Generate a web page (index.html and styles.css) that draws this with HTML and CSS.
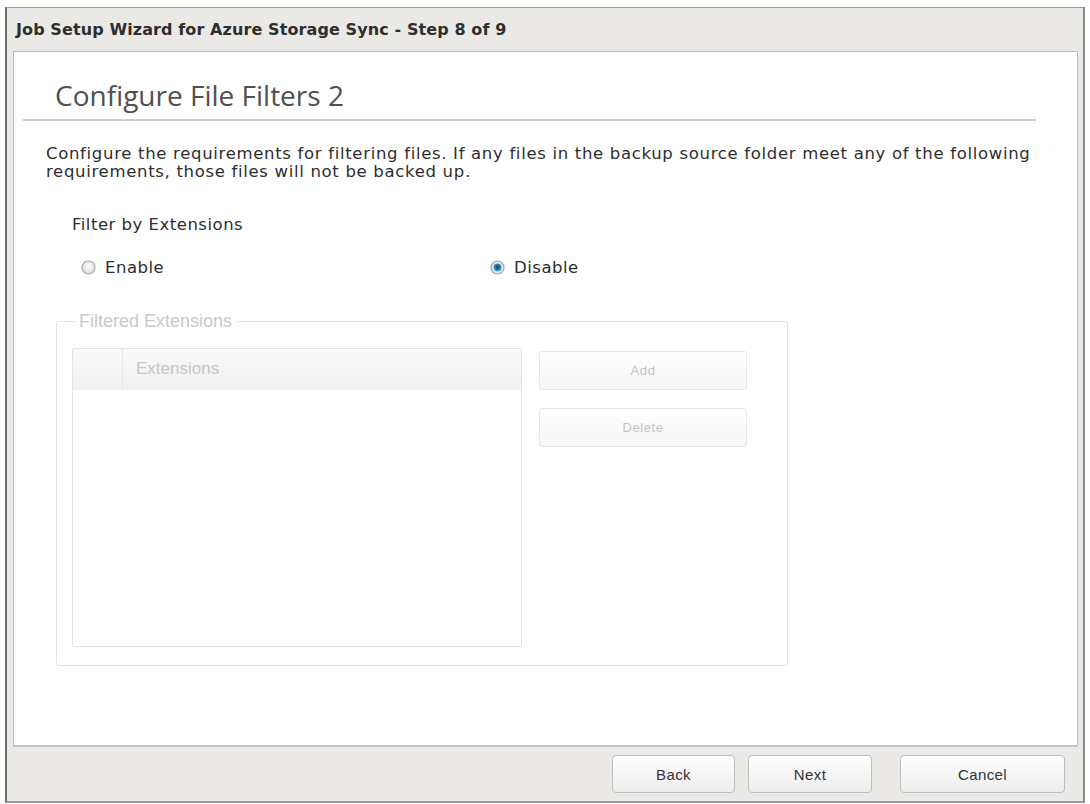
FILE: index.html
```html
<!DOCTYPE html>
<html>
<head>
<meta charset="utf-8">
<link rel="stylesheet" href="styles.css">
</head>
<body>
<div class="window">
  <div class="titlebar">Job Setup Wizard for Azure Storage Sync - Step 8 of 9</div>
  <div class="panel">
    <h1 class="heading">Configure File Filters 2</h1>
    <div class="rule"></div>
    <p class="desc">Configure the requirements for filtering files. If any files in the backup source folder meet any of the following requirements, those files will not be backed up.</p>
    <div class="label">Filter by Extensions</div>
    <div class="radios">
      <label class="radio radio-enable">
        <svg class="radio-icon" width="15" height="15" viewBox="0 0 15 15">
          <defs>
            <radialGradient id="ug" cx="50%" cy="40%" r="60%">
              <stop offset="0" stop-color="#ffffff"/>
              <stop offset="1" stop-color="#d8d8d8"/>
            </radialGradient>
          </defs>
          <circle cx="7.5" cy="7.5" r="6.5" fill="url(#ug)" stroke="#a8a8a8" stroke-width="1.2"/>
        </svg>
        <span>Enable</span>
      </label>
      <label class="radio">
        <svg class="radio-icon" width="15" height="15" viewBox="0 0 15 15">
          <defs>
            <radialGradient id="cg" cx="50%" cy="45%" r="55%">
              <stop offset="0" stop-color="#0d3f5e"/>
              <stop offset="0.6" stop-color="#2a7fae"/>
              <stop offset="1" stop-color="#6fb3d6"/>
            </radialGradient>
          </defs>
          <circle cx="7.5" cy="7.5" r="6.5" fill="#dfe6ea" stroke="#9aa6ad" stroke-width="1.2"/>
          <circle cx="7.5" cy="7.5" r="4" fill="url(#cg)"/>
        </svg>
        <span>Disable</span>
      </label>
    </div>
    <fieldset class="filtered">
      <legend class="legend">Filtered Extensions</legend>
      <div class="filtered-body">
        <div class="table">
          <div class="table-head">
            <div class="col-check"></div>
            <div class="col-ext">Extensions</div>
          </div>
          <div class="table-rows"></div>
        </div>
        <div class="side-buttons">
          <button class="btn-disabled">Add</button>
          <button class="btn-disabled">Delete</button>
        </div>
      </div>
    </fieldset>
  </div>
  <div class="footer">
    <button class="btn btn-back">Back</button>
    <button class="btn btn-next">Next</button>
    <button class="btn btn-cancel">Cancel</button>
  </div>
</div>
</body>
</html>
```
FILE: styles.css
```css
html, body {
  margin: 0;
  padding: 0;
  background: #ffffff;
}

body {
  font-family: "DejaVu Sans", sans-serif;
  color: #333333;
}

.window {
  margin: 7px 0 0 5px;
  width: 1076px;
  height: 793px;
  border: 1px solid #9a9a9a;
  border-left: 2px solid #6e6e6e;
  border-right: 2px solid #8a8a8a;
  border-bottom: 2px solid #9a9a9a;
  background: #ebe9e6;
  display: flex;
  flex-direction: column;
}

.titlebar {
  height: 43px;
  flex: none;
  display: flex;
  align-items: center;
  padding-left: 9px;
  font-family: "DejaVu Sans", sans-serif;
  font-weight: bold;
  font-size: 16px;
  letter-spacing: 0.1px;
  color: #2e2e2e;
}

.panel {
  flex: 1;
  margin: 0 5px 0 6px;
  background: #ffffff;
  border: 1px solid #bdbdbd;
  border-bottom: 2px solid #c4c4c4;
  display: flex;
  flex-direction: column;
}

.heading {
  margin: 27px 0 0 41px;
  font-family: "Open Sans", "Noto Sans", sans-serif;
  font-size: 28px;
  line-height: 32px;
  font-weight: normal;
  color: #505050;
}

.rule {
  margin: 8px 41px 0 9px;
  height: 2px;
  background: #cfcfcf;
}

.desc {
  margin: 24px 20px 0 32px;
  font-size: 16.5px;
  line-height: 18px;
  letter-spacing: 0.68px;
  color: #2e2e2e;
}

.label {
  margin: 34px 0 0 58px;
  font-size: 16.5px;
  line-height: 20px;
  letter-spacing: 0.5px;
  color: #2e2e2e;
}

.radios {
  margin: 22px 0 0 67px;
  display: flex;
  height: 20px;
  align-items: center;
}

.radio {
  display: flex;
  align-items: center;
  gap: 9px;
  font-size: 16.5px;
  letter-spacing: 0.5px;
  color: #2e2e2e;
}

.radio-enable {
  width: 409px;
}

.radio-icon {
  display: block;
}

.filtered {
  margin: 34px 0 0 42px;
  width: 732px;
  height: 355px;
  box-sizing: border-box;
  border: 1px solid #e4e4e4;
  border-radius: 3px;
  padding: 0 0 0 15px;
}

.legend {
  font-family: "Liberation Sans", Arial, sans-serif;
  font-size: 18px;
  color: #c9c9c9;
  padding: 0 4px;
  margin-left: 3px;
}

.filtered-body {
  display: flex;
  gap: 17px;
  margin-top: 16px;
}

.table {
  width: 450px;
  height: 299px;
  box-sizing: border-box;
  border: 1px solid #e3e3e3;
  border-radius: 2px;
  display: flex;
  flex-direction: column;
}

.table-head {
  height: 40px;
  display: flex;
  background: linear-gradient(#f9f9f9, #f0f0f0);
  border-bottom: 1px solid #ececec;
}

.col-check {
  width: 49px;
  border-right: 1px solid #e6e6e6;
}

.col-ext {
  flex: 1;
  display: flex;
  align-items: center;
  padding-left: 13px;
  font-family: "Liberation Sans", Arial, sans-serif;
  font-size: 17px;
  color: #c6c6c6;
}

.table-rows {
  flex: 1;
}

.side-buttons {
  display: flex;
  flex-direction: column;
  gap: 18px;
  padding-top: 3px;
}

.btn-disabled {
  width: 208px;
  height: 39px;
  border: 1px solid #e6e6e6;
  border-radius: 3px;
  background: linear-gradient(#ffffff, #f6f6f6);
  font-family: "Liberation Sans", Arial, sans-serif;
  font-size: 13px;
  letter-spacing: 0.6px;
  color: #c2c2c2;
  padding: 0;
}

.footer {
  flex: none;
  height: 54px;
  display: flex;
  align-items: center;
  padding-right: 18px;
  justify-content: flex-end;
}

.btn {
  height: 38px;
  border: 1px solid #bdbdbd;
  border-radius: 4px;
  background: linear-gradient(#ffffff, #ededed);
  font-family: "Liberation Sans", Arial, sans-serif;
  font-size: 15px;
  letter-spacing: 0.4px;
  color: #333333;
  padding: 0;
}

.btn-back {
  width: 123px;
}

.btn-next {
  width: 124px;
  margin-left: 13px;
}

.btn-cancel {
  width: 165px;
  margin-left: 28px;
}
```
